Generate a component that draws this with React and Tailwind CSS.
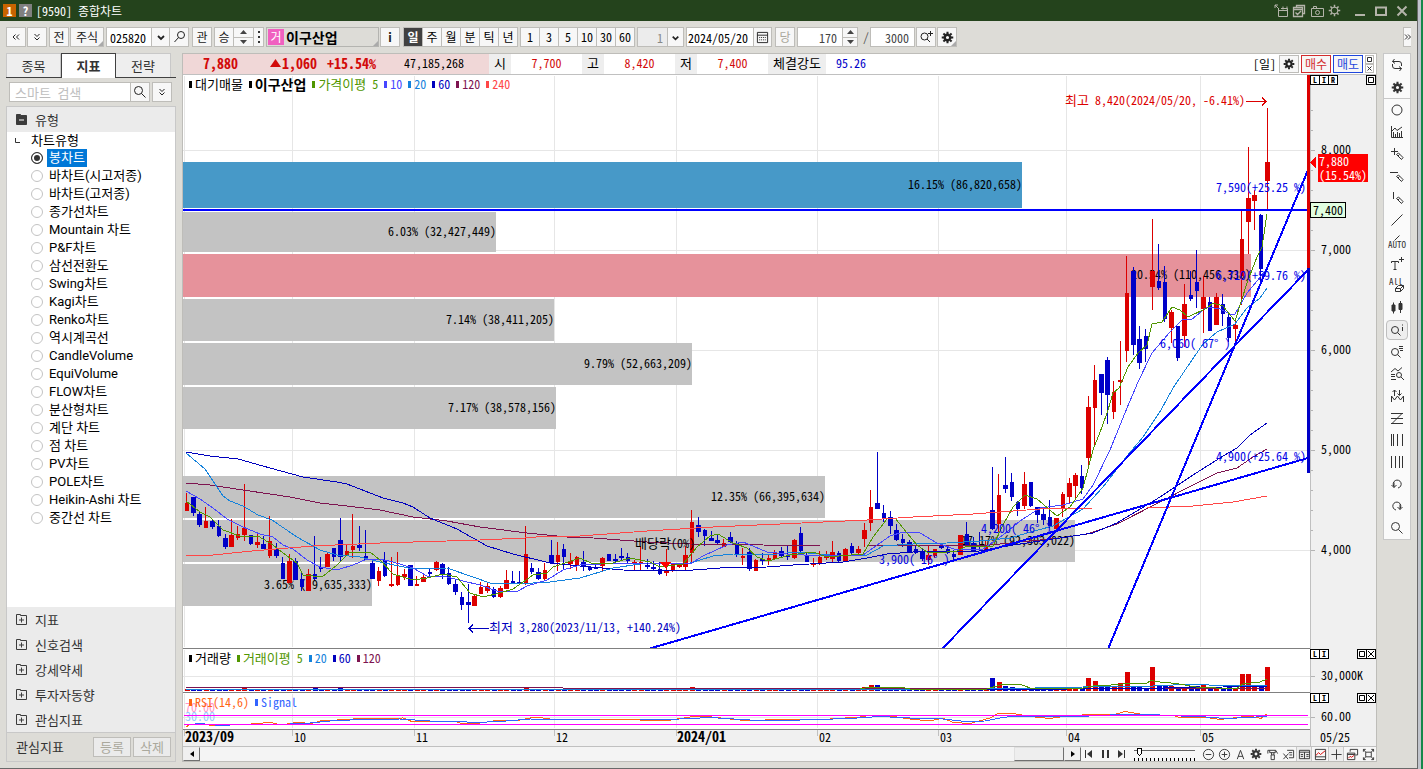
import { useState } from 'react'

const UP = '#dc0000'
const DOWN = '#0000c8'

const CHART_TYPES = [
  '봉차트', '바차트(시고저종)', '바차트(고저종)', '종가선차트', 'Mountain 차트', 'P&F차트', '삼선전환도',
  'Swing차트', 'Kagi차트', 'Renko차트', '역시계곡선', 'CandleVolume', 'EquiVolume', 'FLOW차트',
  '분산형차트', '계단 차트', '점 차트', 'PV차트', 'POLE차트', 'Heikin-Ashi 차트', '중간선 차트',
]

const FOLDERS = ['지표', '신호검색', '강세약세', '투자자동향', '관심지표']

// [up, high, bodyTop, bodyBottom, low], in thirds of a pixel below the base
const LOWER = [
  [1,279,309,332,332],[0,290,291,338,347],[0,336,342,375,380],[1,321,363,383,383],[0,357,363,381,386],
  [0,360,378,408,411],[0,402,415,441,446],[1,357,405,440,440],[1,378,402,413,419],[1,252,384,405,422],
  [0,405,405,432,434],[1,396,426,435,443],[0,408,432,446,446],[1,348,423,467,473],[0,430,448,468,474],
  [0,472,489,536,538],[1,461,484,548,550],[0,474,484,539,539],[0,517,537,561,573],[1,507,522,573,573],
  [0,408,522,536,541],[0,471,501,507,516],[1,460,462,502,502],[0,444,444,471,482],[0,353,420,471,483],
  [1,434,453,465,467],[1,342,438,450,474],[0,378,435,443,453],[0,390,469,479,479],[0,480,489,537,537],
  [1,500,513,542,557],[0,456,480,528,531],[1,470,552,555,560],[1,456,525,555,557],[1,507,521,532,540],
  [0,495,496,557,557],[1,528,552,557,557],[1,522,531,545,546],[0,506,516,521,532],[1,483,486,510,513],
  [0,490,491,522,537],[0,502,520,552,555],[0,540,552,575,585],[0,576,591,614,629],[0,552,606,614,669],
  [1,582,588,617,617],[1,546,561,581,581],[1,545,558,573,578],[0,561,567,590,593],[1,558,564,590,594],
  [1,510,540,567,567],[0,513,543,552,553],[0,513,546,552,556],[1,378,462,552,556],[0,488,504,515,522],
  [0,504,516,537,540],[1,488,510,537,540],[0,420,465,489,491],[1,426,465,486,513],[0,432,447,471,507],
  [1,458,484,493,507],[1,467,472,495,513],[0,453,486,502,512],[0,500,500,509,514],[0,488,500,507,507],
  [1,471,473,498,514],[0,462,462,482,484],[0,463,478,483,490],[0,444,468,473,481],[0,459,471,484,488],
  [1,480,487,493,511],[1,438,487,493,512],[0,476,495,502,506],[0,482,500,508,512],[0,485,508,521,524],
  [1,447,514,517,527],[1,489,493,510,517],[1,488,493,500,503],[1,438,465,500,512],[1,330,366,459,487],
  [0,351,375,396,410],[0,387,390,408,437],[0,393,414,424,424],[0,404,420,430,435],[1,416,430,440,441],
  [0,396,411,426,430],[0,422,430,464,470],[1,444,467,471,495],[0,444,456,506,512],[1,477,480,512,512],
  [0,459,476,480,494],[1,462,474,478,494],[1,450,459,476,477],[0,441,453,468,475],[0,436,464,468,480],
  [1,417,420,473,476],[0,381,399,452,455],[0,459,467,486,486],[1,474,489,492,500],[1,453,470,489,494],
  [1,453,468,474,479],[1,423,456,476,488],[0,453,459,483,486],[1,444,447,486,486],[0,430,439,460,467],
  [1,438,446,459,461],[1,369,390,417,441],[1,270,321,369,393],[0,156,309,326,326],[0,316,339,354,366],
  [0,333,351,378,402],[0,372,390,419,422],[0,402,417,430,441],[0,420,426,456,459],[0,435,447,459,461],
  [0,447,456,477,482],[1,435,465,480,494],[1,447,447,468,473],[0,433,438,441,447],[0,434,447,459,463],
  [0,450,462,471,480],[1,405,405,465,465],[0,366,402,435,440],[0,410,428,452,455],[0,396,435,442,452],
  [1,420,436,450,455],[0,201,330,386,390],[1,222,285,372,396],[0,171,255,266,279],[0,219,246,291,303],
  [0,303,306,327,348],[1,216,252,318,327],[0,246,246,318,321],[0,321,321,345,369],[0,327,342,360,375],
  [0,300,351,378,384],[1,354,354,386,386],[1,276,282,327,350],[1,234,249,291,312],[1,219,225,258,297],
  [0,195,228,264,282],
]
const UPPER = [
  [1,948,981,1134,1167],[1,855,900,984,1095],[0,882,882,938,1005],[0,831,840,944,1032],[1,903,936,996,1016],
  [1,783,900,906,975],[1,528,639,813,846],[0,561,573,795,825],[0,738,777,849,867],[0,747,768,807,846],
  [1,417,573,621,690],[0,492,603,624,629],[0,558,606,716,726],[1,690,696,744,789],[0,738,738,834,843],
  [1,612,672,768,801],[0,573,645,657,663],[0,510,606,633,684],[1,588,651,686,759],[0,651,666,753,753],
  [1,639,651,735,735],[0,642,672,702,738],[0,702,711,774,786],[1,720,735,747,795],[1,393,477,587,675],
  [1,201,354,426,522],[1,330,345,363,450],[0,402,405,567,615],[1,84,246,303,390],
]

const toCandle = (base) => ([up, ...ys]) => [up, ...ys.map(y => Math.round(base + y / 3))]
const CANDLES = [...LOWER.map(toCandle(400)), ...UPPER.map(toCandle(80))]
const candleX = (i) => 186.7 + i * 6.394

const VOLUMES = {
  9: 4, 20: 4, 24: 4, 53: 4, 79: 4, 106: 4, 107: 6, 108: 6, 126: 13, 127: 9, 128: 5, 129: 4, 141: 13, 142: 10,
  143: 4, 144: 4, 145: 4, 146: 8, 147: 19, 148: 4, 149: 4, 151: 24, 152: 5, 153: 5, 154: 5, 156: 4, 157: 5,
  158: 5, 159: 6, 160: 4, 161: 4, 163: 4, 165: 17, 166: 17, 167: 4, 168: 4, 169: 24,
}

const MOVING_AVERAGES = [
  { color: '#7d1450', points: '186,483 210,485 243,490 290,497 320,503 347,506 380,510 413,517 447,521 480,527 527,533 567,537 580,537 647,542 690,544 763,545 820,546 867,546 897,545 980,546 1020,542 1060,538 1087,534 1117,524 1160,502 1187,488 1217,473 1237,468 1253,457 1267,449' },
  { color: '#0000be', points: '186,452 210,456 238,459 270,468 303,477 337,482 347,484 383,498 403,503 413,507 430,518 457,529 487,546 513,554 550,563 580,566 623,570 680,571 720,568 767,567 793,565 843,562 867,558 887,554 913,552 980,551 1000,547 1060,538 1093,533 1117,523 1160,497 1193,475 1223,456 1237,448 1250,435 1267,423' },
  { color: '#1482dc', points: '186,453 205,469 223,496 230,501 243,506 258,515 272,520 297,537 320,550 337,555 360,557 380,562 413,569 447,568 473,577 490,583 517,584 550,582 580,578 613,568 647,563 687,564 713,556 733,554 767,555 797,552 830,555 867,555 883,546 913,544 947,543 980,541 1010,538 1027,533 1053,526 1067,518 1083,509 1103,487 1127,456 1143,437 1161,410 1173,388 1192,360 1203,344 1217,332 1235,324 1247,308 1260,298 1267,288' },
  { color: '#4646ff', points: '186,491 200,499 213,508 227,519 243,527 260,534 273,537 283,545 293,549 307,560 320,567 337,570 353,565 367,559 380,559 393,562 413,568 427,576 443,576 463,581 480,585 497,591 518,591 527,586 547,580 563,570 580,565 623,563 647,563 690,564 703,556 727,545 743,542 767,552 787,554 820,556 863,555 873,548 890,536 903,532 920,533 937,543 957,550 983,549 1003,535 1020,521 1040,508 1063,505 1083,499 1093,485 1110,450 1127,408 1138,382 1152,353 1170,332 1183,319 1191,320 1207,307 1220,309 1230,314 1235,314 1247,293 1257,281 1268,267' },
  { color: '#509600', points: '186,501 200,512 210,517 223,530 240,536 258,536 273,545 283,553 297,563 303,575 322,577 337,565 350,552 370,552 380,560 393,574 413,580 427,578 443,574 457,577 470,593 483,597 500,593 513,589 533,575 547,573 553,567 580,558 593,564 613,563 630,558 650,562 660,567 683,564 697,547 710,536 718,534 733,543 747,548 757,557 768,561 790,555 813,552 827,557 863,554 873,537 887,519 895,518 907,533 917,545 927,552 937,553 957,551 967,546 980,547 993,546 1003,525 1013,507 1025,495 1037,499 1057,516 1070,507 1083,488 1093,450 1102,427 1108,410 1113,393 1119,388 1128,367 1138,353 1147,345 1152,324 1162,322 1172,307 1180,310 1188,317 1207,308 1213,303 1223,306 1235,321 1247,283 1257,257 1262,247 1267,214' },
  { color: '#ff4646', points: '186,556 213,555 252,551 313,546 380,543 480,540 525,538 547,536 580,536 647,531 713,527 780,524 867,520 913,517 973,514 1040,509 1093,508 1147,508 1193,506 1233,502 1267,496' },
]

const SUPPLY = [
  { right: 1022, top: 162, h: 46, fill: '#4799c8', label: '16.15% (86,820,658)' },
  { right: 496, top: 212, h: 40, fill: '#c3c3c3', label: '6.03% (32,427,449)' },
  { right: 1251, top: 254, h: 43, fill: '#e6929b', label: '20.54% (110,456,338)' },
  { right: 554, top: 299, h: 42, fill: '#c3c3c3', label: '7.14% (38,411,205)' },
  { right: 692, top: 343, h: 42, fill: '#c3c3c3', label: '9.79% (52,663,209)' },
  { right: 556, top: 387, h: 42, fill: '#c3c3c3', label: '7.17% (38,578,156)' },
  { right: 825, top: 476, h: 42, fill: '#c3c3c3', label: '12.35% (66,395,634)' },
  { right: 1075, top: 520, h: 42, fill: '#c3c3c3', label: '17.17% (92,303,022)' },
  { right: 372, top: 564, h: 42, fill: '#c3c3c3', label: '3.65% ( 9,635,333)' },
]

const MONTHS = [
  [184, '2023/09', true], [292, '10'], [414, '11'], [554, '12'], [676, '2024/01', true],
  [817, '02'], [938, '03'], [1066, '04'], [1200, '05'],
]

const btn = 'h-5 shrink-0 flex items-center justify-center border border-[#bebdb9] bg-[#f7f7f7] text-[#222]'

function Gear({ size = 13, thin = false }) {
  return (
    <svg width={size} height={size} viewBox="0 0 14 14" fill="none" stroke="currentColor">
      <circle cx="7" cy="7" r={thin ? 3.5 : 3} strokeWidth={thin ? 1.2 : 2.6} />
      <path
        strokeWidth={thin ? 1.6 : 2.2}
        d="M7 .8v2.4M7 10.8v2.4M.8 7h2.4M10.8 7h2.4M2.6 2.6l1.6 1.6M9.8 9.8l1.6 1.6M11.4 2.6 9.8 4.2M4.2 9.8l-1.6 1.6"
      />
    </svg>
  )
}

function Glyph({ d, size = 14, fill = 'none', width = 1, children }) {
  return (
    <svg width={size} height={size} viewBox="0 0 14 14" fill={fill} stroke="currentColor" strokeWidth={width}>
      {d && <path d={d} />}
      {children}
    </svg>
  )
}

const MAGNIFIER = 'M9.5 5.5a4 4 0 1 1-8 0 4 4 0 0 1 8 0zM8.5 8.5l4 4'
const CHEVRON = 'M4 6l3 3 3-3'
const DOUBLE_DOWN = 'M4.500 4l2.500 2.500L9.500 4M4.500 7.500l2.500 2.500 2.500-2.500'

function TitleBar() {
  return (
    <header className="h-[21px] flex items-center bg-[#24431c] text-[#eee] pl-[3px] pr-2">
      <span className="w-[13px] h-[13px] bg-[#c86400] text-white text-[12px] leading-[13px] font-bold text-center">1</span>
      <span className="w-[13px] h-[13px] ml-[3px] bg-[#808080] text-white text-[12px] leading-[13px] font-bold text-center">?</span>
      <h1 className="ml-1 text-[12px] text-white">[9590] 종합차트</h1>
      <div className="ml-auto flex items-center gap-1 text-[#b4b4aa]">
        <button aria-label="내보내기"><Glyph d="M4.500 5v7.500h9V4.500H7M4.500 6.500h9M9 2.500v3M13 2.500v3M1 1l4 4M1 4V1h3" /></button>
        <button aria-label="복사"><Glyph d="M4.500 3V1.500h8v8h-2M1.500 3.500h9v9h-9zM1.500 5.500h9M3.500 8.500l2 2 3.500-3.500" width={1.3} /></button>
        <button aria-label="캡처"><Glyph d="M1.500 4.500h12v8h-12zM3.500 4V2.500h3V4M9.500 8.500a2 2 0 1 1-4 0 2 2 0 0 1 4 0z" /></button>
        <button aria-label="설정"><Gear thin /></button>
        <button aria-label="최소화" className="ml-2"><Glyph d="M2 11h10" width={2} /></button>
        <button aria-label="최대화" className="ml-[3px]"><Glyph d="M2 3.500h10v7.500H2z" width={2} /></button>
        <button aria-label="닫기" className="ml-[3px]"><Glyph d="M2.500 2.500l9 9M11.500 2.500l-9 9" width={2} /></button>
      </div>
    </header>
  )
}

function Spinner({ className }) {
  return (
    <div className={`h-5 shrink-0 flex flex-col border border-[#bebdb9] bg-[#f7f7f7] text-[#444] ${className}`}>
      <button aria-label="증가" className="flex-1 flex items-center justify-center border-b border-[#bebdb9]">
        <svg width="7" height="4" fill="currentColor"><path d="M0 4l3.500-4L7 4z" /></svg>
      </button>
      <button aria-label="감소" className="flex-1 flex items-center justify-center">
        <svg width="7" height="4" fill="currentColor"><path d="M0 0l3.500 4L7 0z" /></svg>
      </button>
    </div>
  )
}

function Corner() {
  return <svg className="absolute right-0 bottom-0" width="5" height="5"><path d="M5 0v5H0z" fill="#aaa" /></svg>
}

function Toolbar() {
  const [period, setPeriod] = useState('일')
  return (
    <div className="h-8 flex items-center pl-[6px] pr-[6px] text-[12px]">
      <button className={`${btn} w-5`} aria-label="이전"><Glyph d="M6.500 4.500 4 7l2.500 2.500M10 4.500 7.500 7 10 9.500" /></button>
      <button className={`${btn} w-5 ml-px`} aria-label="펼치기"><Glyph d={DOUBLE_DOWN} /></button>
      <button className={`${btn} w-5 ml-[2px]`}>전</button>
      <button className={`${btn} relative w-[34px] ml-px`}>주식<Corner /></button>
      <input aria-label="종목코드" defaultValue="025820" className="h-5 w-[46px] ml-[2px] pl-[3px] border border-[#bebdb9] bg-white outline-none" />
      <button className={`${btn} w-[19px] -ml-px`} aria-label="종목 목록"><Glyph d={CHEVRON} width={1.8} /></button>
      <button className={`${btn} w-5 -ml-px`} aria-label="종목 찾기"><Glyph d="M12.500 5a3.500 3.500 0 1 1-7 0 3.500 3.500 0 0 1 7 0zM6.500 7.500l-4 4.500" /></button>
      <button className={`${btn} w-5 ml-[3px]`}>관</button>
      <button className={`${btn} w-5 ml-[2px]`}>승</button>
      <Spinner className="w-[21px] -ml-px" />
      <button className={`${btn} w-[11px] -ml-px`} aria-label="더보기">
        <svg width="2" height="12" fill="#333"><path d="M0 0h2v2H0zM0 5h2v2H0zM0 10h2v2H0z" /></svg>
      </button>
      <div className="relative h-5 w-[113px] ml-[2px] flex items-center border border-[#b4b4b0] bg-[#dddcd7]">
        <span className="w-4 h-4 ml-px bg-[#f060c0] text-white text-center leading-4">거</span>
        <strong className="ml-[2px] text-[14px] leading-4 text-black">이구산업</strong>
        <Corner />
      </div>
      <button className={`${btn} w-5 ml-px font-bold`}>i</button>
      <div className="flex ml-[3px]">
        {['일', '주', '월', '분', '틱', '년'].map(p => (
          <button
            key={p}
            onClick={() => setPeriod(p)}
            className={`h-5 w-5 -mr-px border border-[#bebdb9] ${p === period ? 'bg-[#414141] text-white font-bold' : 'bg-[#f7f7f7] text-black'}`}
          >
            {p}
          </button>
        ))}
      </div>
      <div className="flex ml-[3px]">
        {['1', '3', '5', '10', '30', '60'].map(m => (
          <button key={m} className="h-5 w-5 -mr-px border border-[#bebdb9] bg-[#f7f7f7] text-black">{m}</button>
        ))}
      </div>
      <input aria-label="주기" defaultValue="1" className="h-5 w-[31px] ml-[3px] pr-1 text-right border border-[#bebdb9] bg-[#ececec] text-[#888] outline-none" />
      <button className={`${btn} w-[17px] -ml-px`} aria-label="주기 목록"><Glyph d={CHEVRON} size={13} width={1.8} /></button>
      <input aria-label="날짜" defaultValue="2024/05/20" className="h-5 w-[68px] ml-[2px] pl-px border border-[#bebdb9] bg-white outline-none" />
      <button className={`${btn} w-[19px] -ml-px`} aria-label="달력">
        <Glyph d="M1.500 1.500h11v11h-11zM1.500 4.500h11" size={13}><path d="M3.500 7h7M3.500 9.500h7" strokeDasharray="1 1" /></Glyph>
      </button>
      <button className={`${btn} w-5 ml-[3px] text-[#aaa89c]`}>당</button>
      <input aria-label="봉 개수" defaultValue="170" className="h-5 w-[46px] ml-[2px] pr-[5px] text-right border border-[#bebdb9] bg-white text-[#444] outline-none" />
      <Spinner className="w-4 -ml-px" />
      <span className="ml-1 w-[8px] text-center text-[#555]">/</span>
      <input aria-label="전체 개수" defaultValue="3000" className="h-5 w-[45px] pr-[5px] text-right border border-[#bebdb9] bg-white text-[#444] outline-none" />
      <button className={`${btn} w-5 ml-px`} aria-label="확대"><Glyph d="M9 6.500a3.500 3.500 0 1 1-7 0 3.500 3.500 0 0 1 7 0zM8 9l3 3M11.500 1v5M9 3.500h5" /></button>
      <button className={`${btn} relative w-5 ml-px`} aria-label="차트 설정"><Gear /><Corner /></button>
      <button className="ml-auto h-5 w-[8px] flex items-center border-l border-y border-[#bebdb9] bg-[#f7f7f7]" aria-label="다음">
        <svg width="7" height="8" fill="none" stroke="#333"><path d="M1 1.500 3.500 4 1 6.500M4 1.500 6.500 4 4 6.500" /></svg>
      </button>
    </div>
  )
}

function FolderIcon({ open }) {
  return (
    <svg width="11" height="11" viewBox="0 0 11 11" fill={open ? '#3c3c3c' : 'none'} stroke="#3c3c3c">
      <path d="M.5 .5h4v1h6v9H.5z" />
      <path d={open ? 'M3 6h5' : 'M3 6h5M5.500 3.500v5'} stroke={open ? '#fff' : '#3c3c3c'} />
    </svg>
  )
}

function Sidebar() {
  const [type, setType] = useState('봉차트')
  return (
    <aside className="w-[170px] shrink-0 flex flex-col text-[13px] text-[#333]">
      <div className="h-[25px] flex border-b border-[#414141]">
        <button className="w-[55px] border border-b-0 border-[#c8c8c8] bg-[#eee]">종목</button>
        <button className="w-[55px] h-[25px] border border-b-0 border-[#414141] bg-white font-bold">지표</button>
        <button className="w-[55px] border border-b-0 border-l-0 border-[#c8c8c8] bg-[#eee]">전략</button>
      </div>
      <div className="h-7 flex items-center pl-[3px] pr-1">
        <input
          aria-label="스마트 검색"
          placeholder="스마트 검색"
          className="h-5 min-w-0 flex-1 pl-[5px] border border-[#bebdb9] bg-white placeholder:text-[#bebebe] outline-none"
        />
        <button className={`${btn} w-5 -ml-px`} aria-label="검색"><Glyph d={MAGNIFIER} /></button>
        <button className={`${btn} w-5 ml-[2px]`} aria-label="더보기"><Glyph d={DOUBLE_DOWN} /></button>
      </div>
      <div className="flex-1 flex flex-col border border-[#c8c8c8] bg-white">
        <div className="h-[25px] flex items-center gap-2 pl-[9px] bg-[#ebebeb]"><FolderIcon open />유형</div>
        <div className="flex-1 font-['Roboto','Noto_Sans_CJK_KR',sans-serif] text-black">
          <div className="h-[17px] flex items-center">
            <svg className="ml-2 mr-[11px]" width="5" height="5"><path d="M.5 0v4.500H5" stroke="#333" fill="none" /></svg>
            차트유형
          </div>
          {CHART_TYPES.map(t => (
            <label key={t} className="h-[18px] flex items-center pl-6 gap-1">
              <input
                type="radio"
                name="chartType"
                checked={t === type}
                onChange={() => setType(t)}
                className="appearance-none w-3 h-3 rounded-full border border-[#c3c3c3] bg-white checked:border-[#333] checked:bg-[#333] checked:shadow-[inset_0_0_0_2px_white]"
              />
              <span className={`h-[18px] leading-[17px] px-[2px] ${t === type ? 'bg-[#0078d7] text-white' : ''}`}>{t}</span>
            </label>
          ))}
        </div>
        <div className="bg-[#ebebeb]">
          {FOLDERS.map(f => (
            <button key={f} className="w-full h-[25px] flex items-center gap-2 pl-[9px]"><FolderIcon />{f}</button>
          ))}
        </div>
        <div className="h-[29px] flex items-center pl-[9px] pr-1 border-t border-[#c8c8c8] bg-[#dddcd7]">
          관심지표
          <button className="ml-auto w-[38px] h-5 leading-[18px] border border-[#bebdb9] bg-[#ebebeb] text-[#aaa89c]">등록</button>
          <button className="ml-[2px] w-[38px] h-5 leading-[18px] border border-[#bebdb9] bg-[#ebebeb] text-[#aaa89c]">삭제</button>
        </div>
      </div>
    </aside>
  )
}

function Quote({ label, value, wide }) {
  return (
    <>
      <span className={`h-5 leading-[18px] text-center text-[13px] bg-[#eee] text-black ${wide ? 'w-[58px]' : 'w-[22px]'}`}>{label}</span>
      <span className={`h-5 leading-[18px] text-center ${wide ? 'w-[50px] text-[#0000c8]' : 'w-[71px] text-[#d20a0a]'}`}>{value}</span>
    </>
  )
}

function PriceHeader() {
  return (
    <div className="h-5 flex items-center bg-white text-[12px]">
      <div className="w-[306px] h-5 flex items-center bg-[#f0d7d7] text-[14px] leading-[18px] font-bold text-[#d20a0a] pb-[2px]">
        <span className="w-[76px] pl-5">7,880</span>
        <span className="w-[68px] pl-[11px] flex items-center">
          <svg width="11" height="8" className="mr-px"><path d="M5.500 0 11 8H0z" fill="#d20a0a" /></svg>1,060
        </span>
        <span className="w-[77px] text-left">+15.54%</span>
        <span className="text-[12px] font-normal text-black">47,185,268</span>
      </div>
      <Quote label="시" value="7,700" />
      <Quote label="고" value="8,420" />
      <Quote label="저" value="7,400" />
      <Quote label="체결강도" value="95.26" wide />
      <span className="ml-auto mr-[3px] leading-[18px]">[일]</span>
      <button className={`${btn} w-5 h-[18px]`} aria-label="설정"><Gear size={12} /></button>
      <button className="ml-[2px] w-[30px] h-[18px] leading-4 border border-[#d22d2d] bg-[#f7f7f7] text-[#d22d2d]">매수</button>
      <button className="ml-[2px] w-[30px] h-[18px] leading-4 border border-[#1e46dc] bg-[#f7f7f7] text-[#1e46dc]">매도</button>
      <div className="ml-[2px] mr-[2px] flex flex-col">
        <button className="w-[9px] h-[9px] border border-[#bebdb9] bg-white" aria-label="확대">
          <svg className="block" width="7" height="7" fill="none" stroke="#333"><path d="M1.500 1.500h4v4h-4z" /></svg>
        </button>
        <button className="w-[9px] h-[9px] border border-[#bebdb9] bg-white" aria-label="닫기">
          <svg className="block" width="7" height="7" fill="none" stroke="#333"><path d="M1.500 1.500l4 4M5.500 1.500l-4 4" /></svg>
        </button>
      </div>
    </div>
  )
}

function PaneButtons({ letters, closable }) {
  return (
    <div className="absolute top-0 right-0 w-[66px] flex text-black">
      {letters.map(l => (
        <button key={l} className="w-[10px] h-[10px] -mr-px border border-black bg-white text-[8px] leading-[8px] font-bold">{l}</button>
      ))}
      <button className="ml-auto w-[10px] h-[10px] -mr-px border border-black bg-white" aria-label="최대화">
        <svg className="block" width="8" height="8" fill="none" stroke="#000"><path d="M1.500 1.500h5v5h-5z" /></svg>
      </button>
      {closable && (
        <button className="w-[10px] h-[10px] border border-black bg-white" aria-label="닫기">
          <svg className="block" width="8" height="8" fill="none" stroke="#000"><path d="M1 1l6 6M7 1l-6 6" /></svg>
        </button>
      )}
      {!closable && <span className="w-px" />}
    </div>
  )
}

function Legend({ items }) {
  return (
    <div className="absolute top-px left-[6px] flex items-center gap-[6px] text-[12px] leading-4">
      {items.map(({ name, value, color, bold }) => (
        <span key={name || value} className="flex items-center" style={{ color }}>
          <i className="w-[3px] h-[7px] mr-[3px] bg-current" />
          {name && <span className={bold ? 'text-[14px] font-bold' : 'text-[13px]'}>{name}</span>}
          {value && <span className={name ? 'ml-[6px]' : ''}>{value}</span>}
        </span>
      ))}
    </div>
  )
}

function Pane({ y, h, legend, letters, closable, children }) {
  return (
    <div className="relative">
      <svg className="block w-full h-auto text-[12px]" viewBox={`183 ${y} 1193 ${h}`} shapeRendering="crispEdges">
        <rect x="183" y={y} width="1127" height={h} fill="#fff" />
        {MONTHS.map(([x]) => <rect key={x} x={x} y={y + 1} width="1" height={h - 3} fill="#e6e6e6" />)}
        {children}
        <rect x="183" y={y + h - 1} width="1127" height="1" fill="#808080" />
      </svg>
      {legend && <Legend items={legend} />}
      {letters && <PaneButtons letters={letters} closable={closable} />}
    </div>
  )
}

function Axis({ y, h }) {
  return (
    <>
      <rect x="1310" y={y} width="66" height={h} fill="#f0f0f0" />
      <rect x="1310" y={y} width="1" height={h} fill="#c0c0c0" />
    </>
  )
}

function PricePane() {
  return (
    <Pane
      y={75}
      h={574}
      letters={['L', 'I', 'R']}
      legend={[
        { name: '대기매물', color: '#000000' },
        { name: '이구산업', color: '#000000', bold: true },
        { name: '가격이평', value: '5', color: '#509600' },
        { value: '10', color: '#4646ff' },
        { value: '20', color: '#1482dc' },
        { value: '60', color: '#0000be' },
        { value: '120', color: '#7d1450' },
        { value: '240', color: '#ff4646' },
      ]}
    >
      {[150, 250, 350, 450, 550].map(y => <rect key={y} x="183" y={y} width="1127" height="1" fill="#e6e6e6" />)}
      {SUPPLY.map(s => <rect key={s.label} x="183" y={s.top} width={s.right - 183} height={s.h} fill={s.fill} />)}
      {SUPPLY.map(s => (
        <text key={s.label} x={s.right} y={s.top + Math.floor(s.h / 2) + 4} textAnchor="end">{s.label}</text>
      ))}

      {/* candles */}
      {CANDLES.map(([up, hi, top, bot, lo], i) => {
        const x = candleX(i)
        const left = Math.round(x - 2)
        return (
          <g key={i} fill={up ? UP : DOWN}>
            <rect x={Math.floor(x)} y={hi} width="1" height={Math.max(1, lo - hi)} />
            <rect x={left} y={top} width={Math.round(x + 2.5) - left} height={Math.max(2, bot - top)} />
          </g>
        )
      })}
      {MOVING_AVERAGES.map(m => <polyline key={m.color} points={m.points} fill="none" stroke={m.color} />)}
      <path d="M660 562h11l-5.500 6z" fill="#f00" />

      {/* trend lines */}
      <rect x="183" y="209" width="1127" height="2" fill="#00f" />
      <path d="M648 649 1308 458M942 649 1308 270M1108 649 1308 170" stroke="#00f" strokeWidth="2" fill="none" />
      <rect x="1307" y="75" width="3" height="193" fill="#dc0000" />
      <rect x="1307" y="268" width="3" height="205" fill="#0000c8" />

      <text x="635" y="548"><tspan className="text-[13px]">배당락</tspan>(0%)</text>
      <g fill="#0000e6">
        <text x="1216" y="192">7,590(+25.25 %)</text>
        <text x="1216" y="280">6,710(+59.76 %)</text>
        <text x="1160" y="348">6,060( 67° )</text>
        <text x="1216" y="461">4,900(+25.64 %)</text>
        <text x="981" y="533">4,200( 46° )</text>
        <text x="879" y="564">3,900( 16° )</text>
      </g>
      <text x="489" y="632" fill="#0000be"><tspan className="text-[13px]">최저</tspan> 3,280(2023/11/13, +140.24%)</text>
      <path d="M489 628.5H469M473 624.5l-4 4 4 4" stroke="#0000be" fill="none" />
      <text x="1245" y="105" textAnchor="end" fill="#dc0000"><tspan className="text-[13px]">최고</tspan> 8,420(2024/05/20, -6.41%)</text>
      <path d="M1246 101.500h20M1262 97.500l4 4-4 4" stroke="#dc0000" fill="none" />

      <Axis y={75} h={574} />
      {Array.from({ length: 23 }, (_, i) => 110 + i * 20).map(y => (
        <rect key={y} x="1311" y={y} width={(y - 50) % 100 === 0 ? 4 : 2} height="1" fill="#b4b4b4" />
      ))}
      {['8,000', '7,000', '6,000', '5,000', '4,000'].map((p, i) => (
        <text key={p} x="1321" y={154 + i * 100}>{p}</text>
      ))}
      <path d="M1310 162.500l6-5.500v11z" fill="#f00" />
      <rect x="1318" y="154" width="50" height="28" fill="#f00" />
      <text x="1319" y="166" fill="#fff">7,880</text>
      <text x="1319" y="180" fill="#fff">(15.54%)</text>
      <rect x="1310.500" y="202.500" width="35" height="15" fill="#e1ffe1" stroke="#000" />
      <text x="1313" y="215">7,400</text>
    </Pane>
  )
}

function VolumePane() {
  return (
    <Pane
      y={649}
      h={44}
      letters={['L', 'I']}
      closable
      legend={[
        { name: '거래량', color: '#000000' },
        { name: '거래이평', value: '5', color: '#509600' },
        { value: '20', color: '#1482dc' },
        { value: '60', color: '#0000be' },
        { value: '120', color: '#7d1450' },
      ]}
    >
      <rect x="183" y="676" width="1127" height="1" fill="#e6e6e6" />
      {CANDLES.map(([up], i) => {
        const h = VOLUMES[i] || 2
        const left = Math.round(candleX(i) - 2)
        return <rect key={i} x={left} y={691 - h} width={Math.round(candleX(i) + 3) - left} height={h} fill={up ? UP : DOWN} />
      })}
      <g fill="none">
        <polyline stroke="#7d1450" points="186,687.500 511,687.500 615,688.500 1267,688.500" />
        <polyline stroke="#0000be" points="615,689.500 987,689.500 1150,688.500 1180,687.500 1267,686.500" />
        <polyline stroke="#1482dc" points="186,689 511,689 987,689 1083,687 1143,686.500 1173,685 1200,684.500 1217,685.500 1267,686" />
        <polyline stroke="#509600" points="860,689 870,687 900,687 910,689 987,689 1000,685 1021,684.500 1030,688 1083,688 1093,686 1120,684.500 1126,683.500 1146,683.500 1151,680.500 1160,682 1176,683.500 1196,687 1236,689 1243,684 1260,682 1267,679" />
      </g>
      <Axis y={649} h={44} />
      <rect x="1311" y="676" width="4" height="1" fill="#b4b4b4" />
      <text x="1321" y="680">30,000K</text>
    </Pane>
  )
}

function RsiPane() {
  return (
    <Pane
      y={693}
      h={37}
      letters={['L', 'I']}
      closable
      legend={[{ value: 'RSI(14,6)', color: '#ff6414' }, { value: 'Signal', color: '#3264ff' }]}
    >
      <rect x="183" y="717" width="1127" height="1" fill="#e6e6e6" />
      <text x="185" y="712" fill="#ff96c8">70.00</text>
      <text x="185" y="721" fill="#96c8ff">30.00</text>
      <g fill="none">
        <polyline stroke="#ff6414" points="186,727 191,724 205,724 213,726 233,724 240,725 263,723 270,722 280,725 300,722 310,724 320,721 337,720 353,719 383,718.500 403,718 413,722 433,721 457,722 463,724 480,723 500,720 520,720 535,717 550,719 580,720 610,719 640,720 665,721 690,717 703,716 730,719 750,721 780,719 800,720 830,719 860,717 873,715 890,716 910,719 930,721 943,718 953,722.500 970,723.500 990,718 998,713.500 1013,713.500 1030,716.500 1050,718.500 1066,716 1090,714.500 1116,714 1125,711.500 1143,714.500 1173,715.500 1180,717.500 1210,718 1220,719.500 1233,718 1250,716 1261,718.500 1267,714" />
        <polyline stroke="#3264ff" points="186,725 200,723.500 220,725.500 250,724 290,724 310,723 330,721 360,719.500 400,719 430,721 450,721 475,722.500 500,721.500 530,719 560,719.500 600,720 640,720 680,719 710,717.500 750,720 800,720 850,718.500 880,716.500 910,718 943,719 965,721.500 985,721 1000,718 1015,716 1040,717 1060,716.500 1090,716 1120,714.500 1150,714.500 1180,716 1200,716.500 1225,718.500 1250,717.500 1267,716" />
      </g>
      <g fill="#ff00ff">
        <rect x="184" y="715" width="1124" height="1" />
        <rect x="184" y="724" width="1124" height="1" />
      </g>
      <Axis y={693} h={37} />
      <rect x="1311" y="717" width="4" height="1" fill="#b4b4b4" />
      <text x="1321" y="721">60.00</text>
    </Pane>
  )
}

function DateAxis() {
  return (
    <svg className="block w-full h-auto overflow-visible text-[12px]" viewBox="183 730 1193 17" shapeRendering="crispEdges">
      <rect x="183" y="730" width="1193" height="17" fill="#f0f0f0" />
      {MONTHS.map(([x, label, bold]) => (
        <g key={x}>
          <rect x={x} y="730" width="1" height="6" fill="#c0c0c0" />
          <text x={bold ? x + 1 : x + 2} y="742" className={bold ? 'text-[14px] font-bold' : ''}>{label}</text>
        </g>
      ))}
      <rect x="1310" y="730" width="1" height="17" fill="#c0c0c0" />
      <text x="1320" y="742">05/25</text>
      <rect x="183" y="746" width="1193" height="1" fill="#c0c0c0" />
    </svg>
  )
}

const BOTTOM_ICONS = [
  ['축소', 'M12.500 7a5.500 5.500 0 1 1-11 0 5.500 5.500 0 0 1 11 0zM4 7h6'],
  ['확대', 'M12.500 7a5.500 5.500 0 1 1-11 0 5.500 5.500 0 0 1 11 0zM4 7h6M7 4v6'],
  ['글자', 'M3.500 12 7 2.500l3.500 9.500M4.500 9h5'],
  ['설정', null],
  ['도구', 'M2 6V2.500h8.500L12.500 6M4 2.500V5h6V2.500M6 5v2.500M8.500 5v2.500M5.500 7.500h3.500v5h-3.500z'],
  ['삭제', 'M5.500 2.500h7v8h-5M7.500 5h3.500M8 7.500h3M1.500 6l5 6M7 6l-5.500 6'],
  ['표', 'M1.500 2.500h11v9h-11zM1.500 4.500h11M7 4.500v7M3 7h2.500M3 9h2.500M9 7h2.500M9 9h2.500'],
  ['차트', 'M1.500 1.500h11v11h-11zM1.500 9.500h11'],
  ['십자선', 'M7 1.500v11M1.500 7h11'],
  ['창', 'M4.500 4V1.500h8v6H10M1.500 5.500h8v7h-8zM1.500 7h8'],
  ['전체화면', 'M1.500 4V1.500H4M10 1.500h2.500V4M12.500 10v2.500H10M4 12.500H1.500V10M4 4.500h6v5H4zM1.500 1.500l2.500 3M12.500 1.500l-2.500 3M1.500 12.500l2.500-3M12.500 12.500l-2.500-3'],
]

function BottomBar() {
  return (
    <div className="h-[14px] flex items-center bg-[#f7f7f7] text-[#333]">
      <button className="w-[17px] h-[14px] flex items-center justify-center border border-[#eee] border-r-[#707070] border-b-[#707070] bg-[#f0f0f0]" aria-label="왼쪽으로">
        <svg width="4" height="6"><path d="M4 0v6L0 3z" /></svg>
      </button>
      <div className="flex-1 h-[14px] flex justify-end bg-[#f4f4f4]">
        <div className="w-[50px] h-[14px] border border-[#e0e0e0] border-r-[#707070] border-b-[#707070] bg-[#eee]" />
      </div>
      <button className="w-[17px] h-[14px] flex items-center justify-center border border-[#eee] border-r-[#707070] border-b-[#707070] bg-[#f0f0f0]" aria-label="오른쪽으로">
        <svg width="4" height="6"><path d="M0 0v6l4-3z" /></svg>
      </button>
      <button className="w-4 flex justify-center" aria-label="처음"><svg width="8" height="8"><path d="M0 0h1v8H0zM7 0v8L2 4z" fill="#333" /></svg></button>
      <button className="w-4 flex justify-center" aria-label="정지"><svg width="7" height="8"><path d="M0 0h2v8H0zM5 0h2v8H5z" fill="#333" /></svg></button>
      <button className="w-4 flex justify-center" aria-label="끝"><svg width="8" height="8"><path d="M7 0h1v8H7zM1 0v8l5-4z" fill="#333" /></svg></button>
      <div className="relative w-[62px] h-[14px] ml-[5px] mr-1">
        <svg className="block" width="62" height="14" fill="none" stroke="#000" shapeRendering="crispEdges">
          <path d="M0 3.500h61" stroke="#666" />
          <path d="M0 12.500h62" strokeWidth="3" strokeDasharray="1 3" />
          <path d="M3.500 1.500h4v5l-2 2-2-2z" fill="#fff" />
        </svg>
        <input type="range" aria-label="봉 간격" defaultValue="8" className="absolute inset-0 w-full h-full opacity-0" />
      </div>
      {BOTTOM_ICONS.map(([label, d]) => (
        <button
          key={label}
          aria-label={label}
          className={`w-4 h-[14px] flex items-center justify-center ${label === '표' || label === '십자선' ? 'border-x border-[#c8c8c8] bg-[#eee]' : ''}`}
        >
          {d ? (
            <Glyph d={d} size={13}>
              {label === '차트' && <path d="M2 8l3-3 2 2 5-4" stroke="#dc0000" />}
              {label === '창' && <path d="M2.500 11l2-2 1.500 1 2.500-2" stroke="#dc0000" />}
            </Glyph>
          ) : <Gear size={12} />}
        </button>
      ))}
    </div>
  )
}

const TOOLS = [
  ['새로고침', 'M4.500 1 2.500 3.500l2.500 2M2.500 3.500H9a2.500 2.500 0 0 1 2.500 2.500v2M9.500 13l2-2.500L9 8.500M11.500 10.500H5A2.500 2.500 0 0 1 2.500 8V6'],
  ['설정', null],
  ['원', 'M12 7A5 5 0 1 1 2 7a5 5 0 0 1 10 0z'],
  ['지표 추가', 'M1.500 1v11.500H13M3.500 12V7M5.500 12V9M7.500 12V7M9.500 12V8M11.500 12V6M2 6l3-3 2 2.500L12 2'],
  ['십자 그리기', 'M1 4.500h7M4.500 1v7M6.500 7.500l2-1.500 4.500 4.500-1.500 2zM8 9l1.500-1.500'],
  ['수평선', 'M0 3.500h8M6.500 7.500l2-1.500 4.500 4.500-1.500 2zM8 9l1.500-1.500'],
  ['수직선', 'M3.500 1v7M6.500 7.500l2-1.500 4.500 4.500-1.500 2zM8 9l1.500-1.500'],
  ['추세선', 'M1.500 12.500l11-11'],
  ['자동', 'M7 6l5-5'],
  ['문자', 'M1.500 6V4.500h7V6M5 4.500v8M3.500 12.500h3M11.500 0v5M9 2.500h5'],
  ['전체 삭제', 'M5.500 9.500l3-3h5l-3 3zM5.500 9.500v3h5v-3M10.500 12.500l3-3v-3'],
  ['봉', 'M3.500 1.500v11M10.500 0v12'],
  ['정보', 'M8.500 7a3.500 3.500 0 1 1-7 0 3.500 3.500 0 0 1 7 0zM7.500 9.500l3 3M12.500 4v4M12.500 1.500v1'],
  ['목록', 'M8.500 7a3.500 3.500 0 1 1-7 0 3.500 3.500 0 0 1 7 0zM7.500 9.500l3 3M9 1.500h4M9 3.500h4M10 5.500h3'],
  ['패턴', 'M1 5l4-3.500 3 2.500 4-3.500M1 7.500h4M1 9.500h4M1 12.500h5M11.500 8a2.500 2.500 0 1 1-5 0 2.500 2.500 0 0 1 5 0zM11 10l3 3'],
  ['신호', 'M1.500 13V7l3 4 3-4 3 4 3-4v6M4.500 7V1M2.500 3l2-2 2 2M9.500 1v5M7.500 4.500l2 2 2-2'],
  ['피보나치', 'M1 2.500h12M1 7.500h12M1 12.500h12M12 2.500l-10 10'],
  ['수직 눈금', 'M1.500 1v12M3.500 1v12M7.500 1v12M12.500 1v12'],
  ['등간격', 'M1.500 1v12M5.500 1v12M9.500 1v12M12.500 1v12'],
  ['되돌리기', 'M4 9.500A4 4 0 1 1 8 11M4 5.500v5M1.500 8 4 10.500 6.500 8'],
  ['다시하기', 'M10 9.500A4 4 0 1 0 6 11M10 5.500v5M7.500 8l2.500 2.500L12.500 8'],
  ['돋보기', MAGNIFIER],
]

function ToolRail() {
  return (
    <nav className="w-7 shrink-0 self-start border border-[#c8c8c8] bg-[#fafafa] text-[#333]">
      {TOOLS.map(([label, d], i) => (
        <button
          key={label}
          aria-label={label}
          className={`w-full flex flex-col items-center justify-center ${i === 1 ? 'h-[23px] border-b border-[#c8c8c8]' : 'h-[22px]'}`}
        >
          {label === '자동' && (
            <>
              <svg width="8" height="6" fill="none" stroke="currentColor"><path d="M1.500 5.500l5-5" /></svg>
              <span className="text-[9px] leading-[8px]">AUTO</span>
            </>
          )}
          {label === '설정' && <Gear />}
          {d && label !== '자동' && (
            <span className={label === '정보' ? 'w-[22px] h-5 flex items-center justify-center rounded border border-[#bebebe] bg-[#eee]' : 'relative'}>
              <Glyph d={d}>
                {label === '봉' && <path d="M2 4h3v6H2zM9 2.500h3v6H9z" fill="currentColor" />}
              </Glyph>
              {label === '전체 삭제' && <span className="absolute -left-px -top-[2px] text-[9px] leading-[9px]">All</span>}
            </span>
          )}
        </button>
      ))}
    </nav>
  )
}

export default function App() {
  return (
    <div className="min-h-screen flex bg-[#dddcd7] font-['Noto_Sans_Mono_CJK_KR','Noto_Sans_CJK_KR',monospace] text-[12px] text-black">
      <div className="flex-1 min-w-0 flex flex-col border-b border-[#696969]">
        <TitleBar />
        <Toolbar />
        <div className="flex-1 flex gap-[6px] px-[6px] pb-[6px]">
          <Sidebar />
          <main className="flex-1 min-w-0 self-start border border-[#bebdb9] bg-white">
            <PriceHeader />
            <div className="border-t border-[#c0c0c0]">
              <PricePane />
              <VolumePane />
              <RsiPane />
              <DateAxis />
            </div>
            <BottomBar />
          </main>
          <ToolRail />
        </div>
      </div>
      <div className="w-[6px] shrink-0 border-l border-[#696969] border-r-2 border-r-[#15884a] bg-[#c0c4cc]" />
    </div>
  )
}
